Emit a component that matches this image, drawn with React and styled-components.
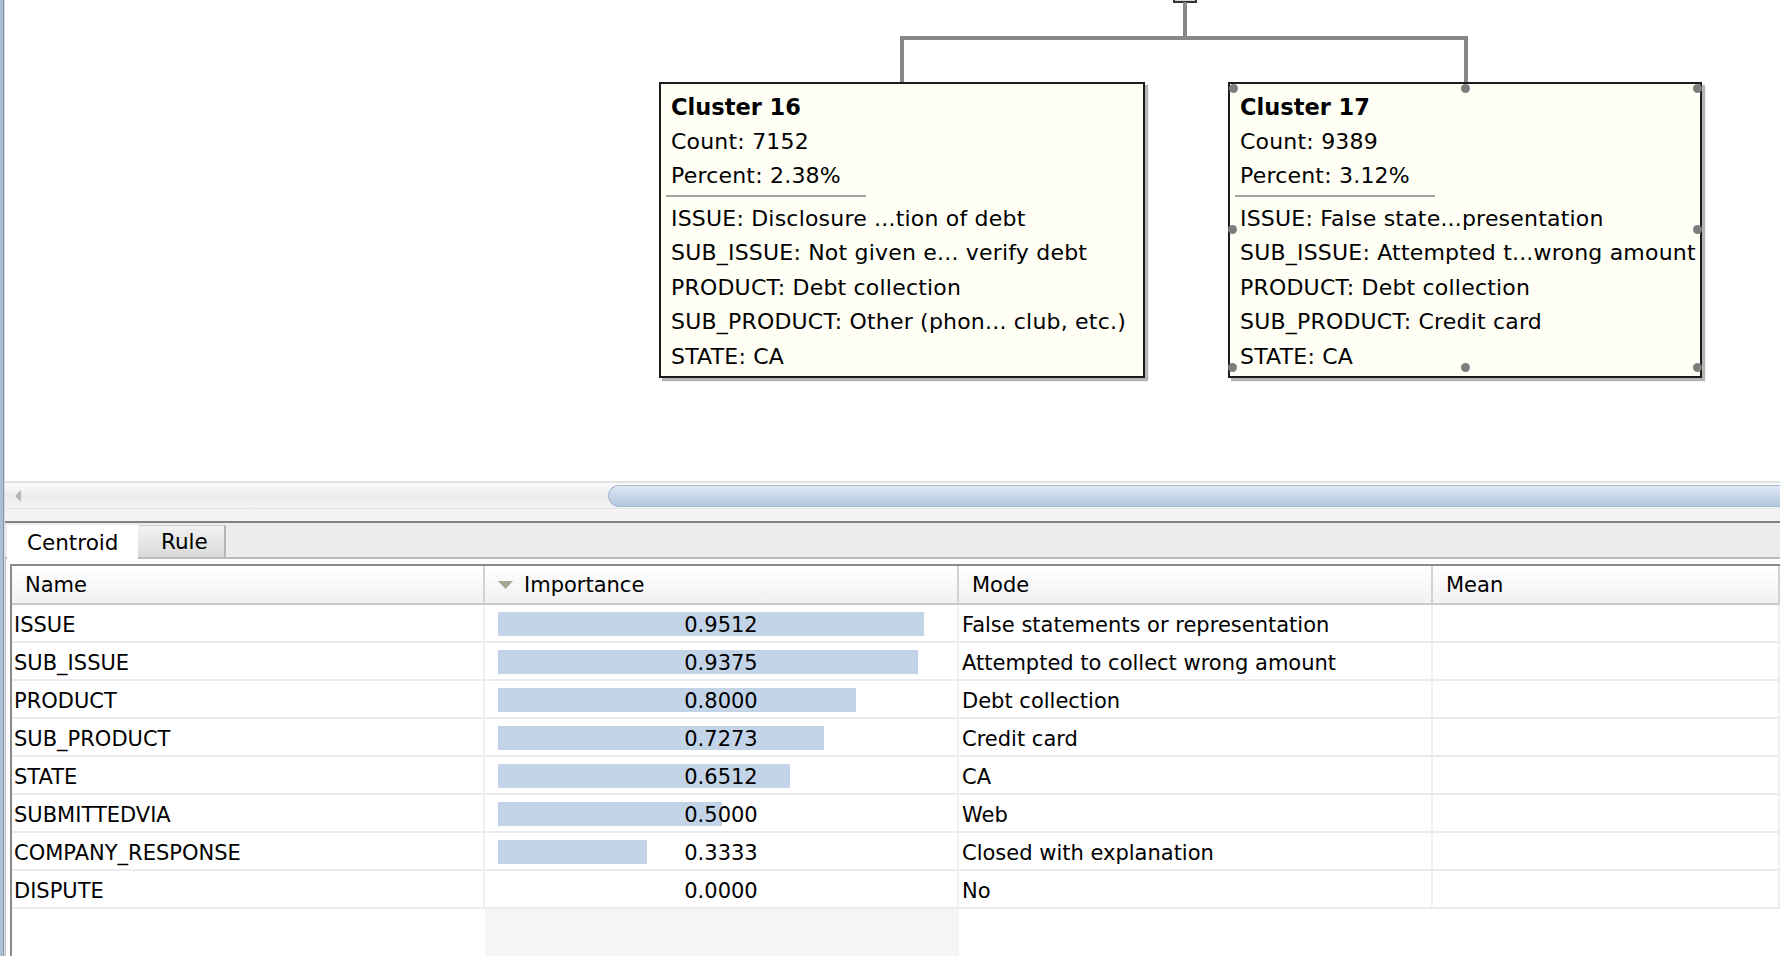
import React from 'react';
import styled, { createGlobalStyle } from 'styled-components';

const GlobalStyle = createGlobalStyle`
  html, body {
    margin: 0;
    padding: 0;
    background: #ffffff;
  }
  body {
    font-family: "DejaVu Sans", "Liberation Sans", sans-serif;
    color: #000;
  }
`;

// canvas starts 5px in from the window edge (the blue frame strip)
const EDGE = 5;

const clusters = [
  {
    id: 16,
    left: 659,
    width: 486,
    count: 7152,
    percent: '2.38%',
    lines: [
      'ISSUE: Disclosure ...tion of debt',
      'SUB_ISSUE: Not given e... verify debt',
      'PRODUCT: Debt collection',
      'SUB_PRODUCT: Other (phon... club, etc.)',
      'STATE: CA',
    ],
  },
  {
    id: 17,
    left: 1228,
    width: 474,
    count: 9389,
    percent: '3.12%',
    selected: true,
    lines: [
      'ISSUE: False state...presentation',
      'SUB_ISSUE: Attempted t...wrong amount',
      'PRODUCT: Debt collection',
      'SUB_PRODUCT: Credit card',
      'STATE: CA',
    ],
  },
];

const handles = [
  [5, 6], [237, 6], [469, 6],
  [4, 147], [469, 147],
  [4, 285], [237, 285], [469, 285],
];

const rows = [
  { name: 'ISSUE', value: 0.9512, mode: 'False statements or representation' },
  { name: 'SUB_ISSUE', value: 0.9375, mode: 'Attempted to collect wrong amount' },
  { name: 'PRODUCT', value: 0.8, mode: 'Debt collection' },
  { name: 'SUB_PRODUCT', value: 0.7273, mode: 'Credit card' },
  { name: 'STATE', value: 0.6512, mode: 'CA' },
  { name: 'SUBMITTEDVIA', value: 0.5, mode: 'Web' },
  { name: 'COMPANY_RESPONSE', value: 0.3333, mode: 'Closed with explanation' },
  { name: 'DISPUTE', value: 0, mode: 'No' },
];

const BAR_MAX = 448;

const App = () => (
  <>
    <GlobalStyle />
    <Window>
      <Canvas>
        <Connectors width="1780" height="481">
          <rect x="1174" y="-10" width="22" height="12" fill="#d8d8d8" stroke="#333" strokeWidth="2" />
          <line x1="1185" y1="2" x2="1185" y2="38" stroke="#878787" strokeWidth="4" />
          <line x1="900" y1="38" x2="1468" y2="38" stroke="#878787" strokeWidth="4" />
          <line x1="902" y1="38" x2="902" y2="82" stroke="#878787" strokeWidth="4" />
          <line x1="1466" y1="38" x2="1466" y2="82" stroke="#878787" strokeWidth="4" />
        </Connectors>
        {clusters.map((c) => (
          <ClusterBox key={c.id} $left={c.left} $width={c.width}>
            <Title>Cluster {c.id}</Title>
            <Line>Count: {c.count}</Line>
            <Line>Percent: {c.percent}</Line>
            <Divider />
            {c.lines.map((l) => (
              <Line key={l}>{l}</Line>
            ))}
            {c.selected &&
              handles.map(([x, y]) => <Handle key={`${x}-${y}`} $x={x} $y={y} />)}
          </ClusterBox>
        ))}
      </Canvas>

      <HScroll>
        <ScrollArrow width="8" height="12" viewBox="0 0 8 12">
          <path d="M7 0 L1 6 L7 12 Z" fill="#b4b4b4" />
        </ScrollArrow>
        <Thumb />
      </HScroll>
      <Gap />

      <TabPane>
        <TabStrip>
          <Tab $active>Centroid</Tab>
          <Tab>Rule</Tab>
        </TabStrip>
        <TableArea>
          <Table>
            <HeadCell $pad={13}>Name</HeadCell>
            <HeadCell $pad={13}>
              <SortIcon width="15" height="9" viewBox="0 0 15 9">
                <path d="M0 0 L15 0 L7.5 8 Z" fill="#a8a690" />
              </SortIcon>
              Importance
            </HeadCell>
            <HeadCell $pad={13}>Mode</HeadCell>
            <HeadCell $pad={13}>Mean</HeadCell>

            {rows.map((r) => (
              <React.Fragment key={r.name}>
                <Cell $pad={2}>{r.name}</Cell>
                <ValueCell>
                  {r.value > 0 && (
                    <Bar style={{ width: Math.round(r.value * BAR_MAX) }} />
                  )}
                  <ValueText>{r.value.toFixed(4)}</ValueText>
                </ValueCell>
                <Cell $pad={3}>{r.mode}</Cell>
                <Cell $pad={3} />
              </React.Fragment>
            ))}

            <Filler />
            <Filler $shade />
            <Filler />
            <Filler />
          </Table>
        </TableArea>
      </TabPane>
    </Window>
  </>
);

const Window = styled.div`
  width: 1780px;
  height: 956px;
  overflow: hidden;
  display: flex;
  flex-direction: column;
  box-sizing: border-box;
  padding-left: ${EDGE}px;
  background: linear-gradient(to right, #aebed2 0 3px, #8495ab 3px 4px, #d9dee5 4px 5px, #ffffff 5px);
`;

const Canvas = styled.div`
  position: relative;
  flex: 0 0 481px;
  background: #ffffff;
`;

const Connectors = styled.svg`
  position: absolute;
  left: -${EDGE}px;
  top: 0;
`;

const ClusterBox = styled.div`
  position: absolute;
  left: ${(p) => p.$left - EDGE}px;
  top: 82px;
  width: ${(p) => p.$width}px;
  height: 296px;
  box-sizing: border-box;
  border: 2px solid #1c1c1c;
  background: #fffff6;
  box-shadow: 3px 3px 1px #b4b4b4;
  padding: 6px 0 0 10px;
  font-size: 22px;
  letter-spacing: 0.2px;
  line-height: 34.5px;
  white-space: nowrap;
`;

const Title = styled.div`
  font-weight: bold;
  font-size: 22.5px;
  letter-spacing: 0;
`;

const Line = styled.div``;

const Divider = styled.div`
  width: 200px;
  height: 2px;
  background: #a4a4a4;
  margin: 1px 0 5px -5px;
`;

const Handle = styled.span`
  position: absolute;
  left: ${(p) => p.$x - 2 - 4.5}px;
  top: ${(p) => p.$y - 2 - 4.5}px;
  width: 9px;
  height: 9px;
  border-radius: 50%;
  background: #7d7d7d;
`;

const HScroll = styled.div`
  flex: 0 0 28px;
  display: flex;
  align-items: center;
  box-sizing: border-box;
  border-top: 2px solid #e2e2e2;
  border-bottom: 1px solid #e6e6e6;
  background: linear-gradient(#fbfbfb, #ececec 55%, #f3f3f3);
`;

const ScrollArrow = styled.svg`
  margin-left: 9px;
  flex: 0 0 auto;
`;

const Thumb = styled.div`
  margin-left: 586px;
  flex: 1;
  height: 22px;
  box-sizing: border-box;
  border: 1px solid #a7bad1;
  border-right: none;
  border-radius: 12px 0 0 12px;
  background: linear-gradient(#e2eaf4, #cfdcec 35%, #c2d3e7 60%, #b5c7dc);
`;

const Gap = styled.div`
  flex: 0 0 12px;
  background: #f3f3f3;
`;

const TabPane = styled.div`
  flex: 1;
  display: flex;
  flex-direction: column;
  border-top: 2px solid #828282;
  background: #ffffff;
  min-height: 0;
`;

const TabStrip = styled.div`
  flex: 0 0 36px;
  box-sizing: border-box;
  display: flex;
  align-items: stretch;
  padding: 2px 0 0 2px;
  background: #ececec;
  border-bottom: 2px solid #bababa;
`;

const Tab = styled.div`
  display: flex;
  align-items: center;
  box-sizing: border-box;
  font-size: 21.5px;
  width: ${(p) => (p.$active ? '131px' : '88px')};
  padding-left: ${(p) => (p.$active ? '20px' : '23px')};
  background: ${(p) => (p.$active ? '#ffffff' : 'linear-gradient(#f2f2f2, #dadada)')};
  border-right: ${(p) => (p.$active ? 'none' : '2px solid #b4b4b4')};
  border-top: ${(p) => (p.$active ? 'none' : '1px solid #d2d2d2')};
  margin-bottom: ${(p) => (p.$active ? '-2px' : '0')};
`;

const TableArea = styled.div`
  flex: 1;
  display: flex;
  min-height: 0;
  padding: 5px 0 0 4px;
  border-left: 1px solid #c4c4c4;
`;

const Table = styled.div`
  flex: 1;
  display: grid;
  grid-template-columns: 473px 474px 474px 1fr;
  grid-template-rows: 39px repeat(8, 38px) 1fr;
  border-top: 2px solid #8a8a8a;
  border-left: 2px solid #8a8a8a;
  font-size: 21px;
`;

const HeadCell = styled.div`
  display: flex;
  align-items: center;
  box-sizing: border-box;
  padding-left: ${(p) => p.$pad}px;
  background: linear-gradient(#ffffff, #f1f1f1);
  border-bottom: 2px solid #c9c9c9;
  border-right: 2px solid #d2d2d2;
  white-space: nowrap;
`;

const SortIcon = styled.svg`
  margin-right: 11px;
  margin-top: 2px;
`;

const Cell = styled.div`
  display: flex;
  align-items: center;
  box-sizing: border-box;
  padding-left: ${(p) => p.$pad}px;
  padding-top: 3px;
  border-bottom: 2px solid #ebebeb;
  border-right: 2px solid #f0f0f0;
  white-space: nowrap;
  background: #ffffff;
`;

const ValueCell = styled(Cell)`
  position: relative;
  justify-content: center;
  padding-left: 0;
`;

const Bar = styled.div`
  position: absolute;
  left: 13px;
  top: 7px;
  height: 24px;
  background: #c3d4e9;
`;

const ValueText = styled.span`
  position: relative;
`;

const Filler = styled.div`
  background: ${(p) => (p.$shade ? '#f5f5f5' : '#ffffff')};
`;

export default App;
